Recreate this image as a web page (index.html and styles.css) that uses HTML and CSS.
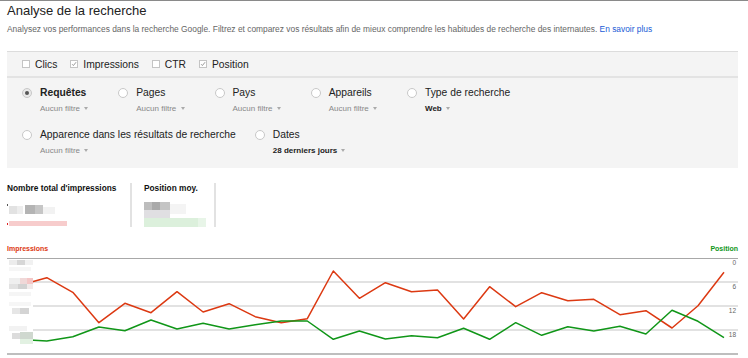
FILE: index.html
```html
<!DOCTYPE html>
<html lang="fr">
<head>
    <meta charset="UTF-8">
    <title>Analyse de la recherche</title>
    <link rel="stylesheet" href="styles.css">
</head>
<body>
<div class="page">
    <h1 class="title">Analyse de la recherche</h1>
    <p class="intro">Analysez vos performances dans la recherche Google. Filtrez et comparez vos résultats afin de mieux comprendre les habitudes de recherche des internautes. <a href="#">En savoir plus</a></p>

    <div class="filters">
        <div class="metrics">
            <label class="metric"><span class="box"></span>Clics</label>
            <label class="metric"><span class="box"><svg width="8" height="8" viewBox="0 0 8 8"><polyline points="1.5,4.3 3.2,6 6.8,1.6" fill="none" stroke="#777" stroke-width="1"/></svg></span>Impressions</label>
            <label class="metric"><span class="box"></span>CTR</label>
            <label class="metric"><span class="box"><svg width="8" height="8" viewBox="0 0 8 8"><polyline points="1.5,4.3 3.2,6 6.8,1.6" fill="none" stroke="#777" stroke-width="1"/></svg></span>Position</label>
        </div>

        <div class="dims">
            <div class="dim-row">
                <div class="dim">
                    <span class="radio on"></span>
                    <div>
                        <div class="dim-name strong">Requêtes</div>
                        <div class="dim-sub">Aucun filtre <span class="caret"></span></div>
                    </div>
                </div>
                <div class="dim">
                    <span class="radio"></span>
                    <div>
                        <div class="dim-name">Pages</div>
                        <div class="dim-sub">Aucun filtre <span class="caret"></span></div>
                    </div>
                </div>
                <div class="dim">
                    <span class="radio"></span>
                    <div>
                        <div class="dim-name">Pays</div>
                        <div class="dim-sub">Aucun filtre <span class="caret"></span></div>
                    </div>
                </div>
                <div class="dim">
                    <span class="radio"></span>
                    <div>
                        <div class="dim-name">Appareils</div>
                        <div class="dim-sub">Aucun filtre <span class="caret"></span></div>
                    </div>
                </div>
                <div class="dim">
                    <span class="radio"></span>
                    <div>
                        <div class="dim-name">Type de recherche</div>
                        <div class="dim-sub dark">Web <span class="caret"></span></div>
                    </div>
                </div>
            </div>
            <div class="dim-row second">
                <div class="dim">
                    <span class="radio"></span>
                    <div>
                        <div class="dim-name">Apparence dans les résultats de recherche</div>
                        <div class="dim-sub">Aucun filtre <span class="caret"></span></div>
                    </div>
                </div>
                <div class="dim">
                    <span class="radio"></span>
                    <div>
                        <div class="dim-name">Dates</div>
                        <div class="dim-sub dark">28 derniers jours <span class="caret"></span></div>
                    </div>
                </div>
            </div>
        </div>
    </div>

    <div class="stats">
        <div class="stat first">
            <div class="stat-title">Nombre total d'impressions</div>
            <svg class="stat-value" width="70" height="33" viewBox="0 0 70 33">
                <rect x="0" y="10" width="1" height="2" fill="#555"/>
                <rect x="2" y="12" width="8" height="8" fill="#e2e2e2"/>
                <rect x="10" y="12" width="6" height="8" fill="#ededed"/>
                <rect x="18" y="11" width="10" height="9" fill="#b4b4b4"/>
                <rect x="28" y="11" width="8" height="9" fill="#c6c6c6"/>
                <rect x="36" y="13" width="12" height="7" fill="#f2f2f2"/>
                <rect x="0" y="29" width="1" height="2" fill="#d22"/>
                <rect x="2" y="27" width="58" height="5" fill="#f7cccc"/>
            </svg>
        </div>
        <div class="stat">
            <div class="stat-title">Position moy.</div>
            <svg class="stat-value" width="70" height="33" viewBox="0 0 70 33">
                <rect x="0" y="8" width="8" height="8" fill="#bdbdbd"/>
                <rect x="8" y="8" width="8" height="8" fill="#a9a9a9"/>
                <rect x="16" y="8" width="10" height="8" fill="#c4c4c4"/>
                <rect x="0" y="16" width="26" height="8" fill="#e0dfe2"/>
                <rect x="26" y="10" width="16" height="10" fill="#f4f4f4"/>
                <rect x="0" y="24" width="54" height="9" fill="#dcf0dc"/>
                <rect x="54" y="24" width="8" height="9" fill="#e8f5e8"/>
            </svg>
        </div>
    </div>

    <div class="chart">
        <div class="chart-head">
            <span class="serie-imp">Impressions</span>
            <span class="serie-pos">Position</span>
        </div>
        <svg class="plot" width="731" height="104" viewBox="0 0 731 104">
            <line x1="0" y1="4.5" x2="731" y2="4.5" stroke="#a8a8a8" stroke-width="1"/>
            <line x1="0" y1="28" x2="731" y2="28" stroke="#e2e2e2" stroke-width="2"/>
            <line x1="0" y1="52" x2="731" y2="52" stroke="#e2e2e2" stroke-width="2"/>
            <line x1="0" y1="76" x2="731" y2="76" stroke="#e2e2e2" stroke-width="2"/>
            <line x1="0" y1="100" x2="731" y2="100" stroke="#a8a8a8" stroke-width="1.5"/>

            <polyline fill="none" stroke="#dc3912" stroke-width="1.5" stroke-linejoin="round"
                points="13.7,31 39.8,23.7 65.8,38.3 91.9,68.7 117.9,49.3 144,58.7 170,37.7 196.1,58 222.1,49.7 248.2,62.7 274.2,68.7 300.3,64.7 326.3,17 352.4,44.3 378.4,28.7 404.5,37.7 430.5,36 456.6,65 482.6,32.7 508.7,52.7 534.7,38.7 560.8,46.7 586.8,45.3 612.9,60.7 638.9,56.7 665,74 691,51.7 717,18.3"/>
            <polyline fill="none" stroke="#109618" stroke-width="1.5" stroke-linejoin="round"
                points="13.7,85.5 39.8,87 65.8,82.7 91.9,73 117.9,76.7 144,66 170,75 196.1,69.3 222.1,75 248.2,70.7 274.2,67 300.3,67 326.3,85.3 352.4,77 378.4,85 404.5,81.7 430.5,83.7 456.6,74.3 482.6,85.3 508.7,68.7 534.7,81.3 560.8,72.7 586.8,77 612.9,72.3 638.9,80 665,56.3 691,67.3 717,83.7"/>

            <g class="blur-labels">
                <rect x="0" y="5" width="26" height="13" fill="#fff"/>
                <rect x="2" y="6" width="8" height="5" fill="#ececec"/>
                <rect x="10" y="6" width="8" height="5" fill="#d6d6d6"/>
                <rect x="18" y="6" width="8" height="5" fill="#f1f1f1"/>
                <rect x="2" y="13" width="22" height="4" fill="#f6f6f6"/>
                <rect x="0" y="23" width="26" height="20" fill="#fff"/>
                <rect x="2" y="24" width="11" height="6" fill="#efefef"/>
                <rect x="13" y="24" width="7" height="6" fill="#f0d8d8"/>
                <rect x="20" y="24" width="6" height="6" fill="#f4c6c6"/>
                <rect x="2" y="30" width="9" height="5" fill="#e2e2e2"/>
                <rect x="11" y="30" width="9" height="5" fill="#d2d2d2"/>
                <rect x="20" y="30" width="6" height="5" fill="#f1eaea"/>
                <rect x="2" y="38" width="22" height="4" fill="#f5f5f5"/>
                <rect x="0" y="47" width="26" height="16" fill="#fff"/>
                <rect x="2" y="48" width="22" height="4" fill="#f6f6f6"/>
                <rect x="5" y="54" width="8" height="6" fill="#e6e6e6"/>
                <rect x="13" y="54" width="9" height="6" fill="#d4d4d4"/>
                <rect x="0" y="71" width="26" height="20" fill="#fff"/>
                <rect x="2" y="72" width="18" height="5" fill="#f2f2f2"/>
                <rect x="5" y="79" width="8" height="6" fill="#dcdcdc"/>
                <rect x="13" y="78" width="13" height="7" fill="#cfd8cf"/>
                <rect x="13" y="85" width="13" height="5" fill="#e2f1e2"/>
            </g>

            <g class="axis">
                <text x="729" y="11" text-anchor="end">0</text>
                <text x="729" y="35" text-anchor="end">6</text>
                <text x="729" y="59" text-anchor="end">12</text>
                <text x="729" y="83" text-anchor="end">18</text>
            </g>
        </svg>
    </div>
</div>
</body>
</html>
```

FILE: styles.css
```css
body {
    margin: 0;
    padding: 0;
    background: #fff;
    border-top: 1px solid #8a8a8a;
    font-family: "Liberation Sans", Arial, sans-serif;
    color: #222;
}
.page {
    width: 731px;
    padding: 0 10px 0 7px;
}
.title {
    margin: 0;
    padding-top: 2px;
    font-size: 13px;
    line-height: 15px;
    font-weight: normal;
    color: #222;
}
.intro {
    margin: 6px 0 0 0;
    font-size: 8.4px;
    line-height: 10px;
    color: #666;
}
.intro a {
    color: #1a5bd6;
    text-decoration: none;
}
.filters {
    margin-top: 17px;
    background: #f4f4f4;
    border-top: 1px solid #dcdcdc;
}
.metrics {
    height: 24px;
    display: flex;
    align-items: center;
    padding-left: 15px;
    border-bottom: 2px solid #e3e3e3;
}
.metric {
    display: flex;
    align-items: center;
    margin-right: 13px;
    font-size: 10.3px;
    color: #222;
}
.box {
    width: 8px;
    height: 8px;
    box-sizing: border-box;
    border: 1px solid #c4c4c4;
    background: #fff;
    margin-right: 5px;
    display: flex;
    align-items: center;
    justify-content: center;
}
.box svg {
    display: block;
}
.dims {
    padding: 9px 0 12px 15px;
}
.dim-row {
    display: flex;
    gap: 30px;
}
.dim-row.second {
    margin-top: 15px;
    gap: 19px;
}
.dim {
    display: flex;
    align-items: flex-start;
}
.radio {
    width: 10px;
    height: 10px;
    box-sizing: border-box;
    border: 1px solid #c8c8c8;
    border-radius: 50%;
    background: #fff;
    margin: 1px 8px 0 0;
    position: relative;
    flex-shrink: 0;
}
.radio.on {
    background: #e9e9e9;
}
.radio.on::after {
    content: "";
    position: absolute;
    left: 2px;
    top: 2px;
    width: 4px;
    height: 4px;
    border-radius: 50%;
    background: #555;
}
.dim-name {
    font-size: 10.3px;
    line-height: 12px;
    color: #222;
    white-space: nowrap;
}
.dim-name.strong {
    font-weight: bold;
}
.dim-sub {
    margin-top: 5px;
    font-size: 8px;
    line-height: 10px;
    color: #888;
    white-space: nowrap;
}
.dim-sub.dark {
    color: #222;
    font-weight: bold;
}
.caret {
    display: inline-block;
    width: 0;
    height: 0;
    margin-left: 2px;
    border-left: 2.5px solid transparent;
    border-right: 2.5px solid transparent;
    border-top: 3px solid #aaa;
    vertical-align: 1px;
}
.stats {
    display: flex;
    margin-top: 15px;
    height: 44px;
}
.stat {
    width: 70px;
    padding-left: 12px;
    border-right: 2px solid #e2e2e2;
}
.stat.first {
    width: 123px;
    padding-left: 0;
}
.stat-title {
    font-size: 8.3px;
    line-height: 10px;
    font-weight: bold;
    color: #111;
    white-space: nowrap;
}
.stat-value {
    display: block;
    margin-top: 1px;
}
.chart {
    margin-top: 17px;
}
.chart-head {
    height: 10px;
    display: flex;
    justify-content: space-between;
    font-size: 7px;
    line-height: 10px;
    font-weight: bold;
}
.serie-imp {
    color: #dc3912;
}
.serie-pos {
    color: #109618;
}
.plot {
    display: block;
}
.axis text {
    font-family: "Liberation Sans", Arial, sans-serif;
    font-size: 6.5px;
    fill: #666;
}
```
